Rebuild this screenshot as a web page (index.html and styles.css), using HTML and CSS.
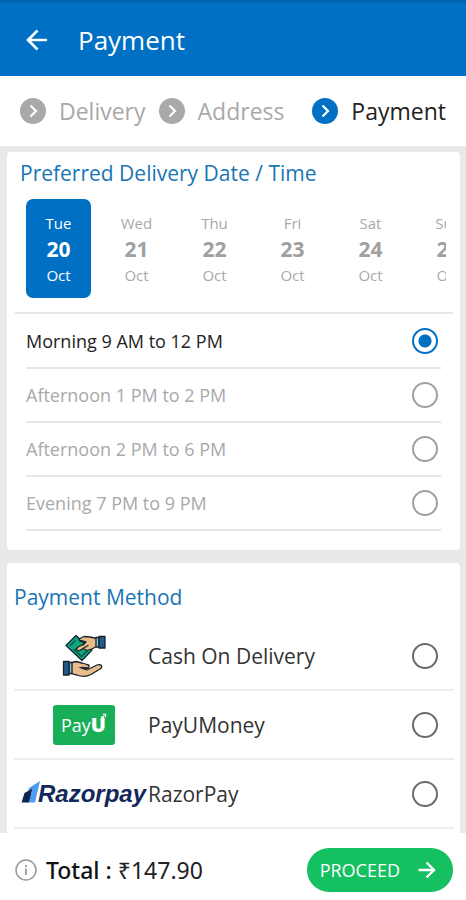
FILE: index.html
```
<!DOCTYPE html>
<html lang="en">
<head>
<meta charset="utf-8">
<meta name="viewport" content="width=device-width, initial-scale=1">
<title>Payment</title>
<link rel="stylesheet" href="styles.css">
</head>
<body>
<header class="topbar">
  <button class="back" type="button" aria-label="Back">
    <svg width="24" height="24" viewBox="0 0 24 24" fill="none" stroke="currentColor" stroke-width="2.600"><path d="M23 12H4.500M13.500 2.500L4 12L13.500 21.500"/></svg>
  </button>
  <h1>Payment</h1>
</header>
<nav class="steps" aria-label="Checkout steps">
  <a class="step" href="#delivery"><svg width="26" height="26" viewBox="0 0 26 26"><circle cx="13" cy="13" r="13" fill="currentColor"/><path d="M10.500 7.500L16 13L10.500 18.500" fill="none" stroke="#fff" stroke-width="2.200"/></svg><span>Delivery</span></a>
  <a class="step" href="#address"><svg width="26" height="26" viewBox="0 0 26 26"><circle cx="13" cy="13" r="13" fill="currentColor"/><path d="M10.500 7.500L16 13L10.500 18.500" fill="none" stroke="#fff" stroke-width="2.200"/></svg><span>Address</span></a>
  <a class="step current" href="#payment" aria-current="step"><svg width="26" height="26" viewBox="0 0 26 26"><circle cx="13" cy="13" r="13" fill="currentColor"/><path d="M10.500 7.500L16 13L10.500 18.500" fill="none" stroke="#fff" stroke-width="2.200"/></svg><span>Payment</span></a>
</nav>
<main class="content">
  <section class="card schedule">
    <h2>Preferred Delivery Date / Time</h2>
    <div class="dates">
      <button type="button" class="date selected"><span>Tue</span><b>20</b><span>Oct</span></button>
      <button type="button" class="date"><span>Wed</span><b>21</b><span>Oct</span></button>
      <button type="button" class="date"><span>Thu</span><b>22</b><span>Oct</span></button>
      <button type="button" class="date"><span>Fri</span><b>23</b><span>Oct</span></button>
      <button type="button" class="date"><span>Sat</span><b>24</b><span>Oct</span></button>
      <button type="button" class="date"><span>Sun</span><b>25</b><span>Oct</span></button>
    </div>
    <div class="slots">
      <label class="slot"><span>Morning 9 AM to 12 PM</span><input type="radio" name="slot" checked></label>
      <label class="slot"><span>Afternoon 1 PM to 2 PM</span><input type="radio" name="slot"></label>
      <label class="slot"><span>Afternoon 2 PM to 6 PM</span><input type="radio" name="slot"></label>
      <label class="slot"><span>Evening 7 PM to 9 PM</span><input type="radio" name="slot"></label>
    </div>
  </section>
  <section class="card methods">
    <h2>Payment Method</h2>
    <label class="method">
      <span class="logo">
        <svg width="44" height="44" viewBox="0 0 44 44" stroke="#17232b" stroke-width="1.300" stroke-linejoin="round" stroke-linecap="round" aria-hidden="true">
          <path d="M4 11.500L14 1.500L30 16L20 26.500Z" fill="#12a680"/>
          <path d="M8.500 11.500L13 7M12 15.500L19.500 22.500L25 17" fill="none" stroke="#07564a" stroke-width="1.500"/>
          <path d="M17 5L22 2.500L28 3L35 4.500V12L31 14.500L25 16.500L21 14.500L17 17L14 15.500L16 13L21 10.500L23 8L18 7Z" fill="#e9bd8b"/>
          <path d="M18 6.500L24 8L21 11M21 14.500L26 11.500" fill="none"/>
          <path d="M34 3.500H37V13H34Z" fill="#8cc5e3"/>
          <path d="M37 2.500H43V14H37Z" fill="#225b8b"/>
          <path d="M8 29L14 27.500L20 29L25 30.500C28 31 28 33.500 25 34L20 33.500L27 35L35 31C40 29.500 41 33 38 35L29 40.500C25 42.500 19 42.500 15 41L8 39Z" fill="#e9bd8b"/>
          <path d="M18 33.500L25 36" fill="none"/>
          <path d="M7 28.500H10V39.500H7Z" fill="#8cc5e3"/>
          <path d="M1.500 27.500H7V41H1.500Z" fill="#225b8b"/>
        </svg>
      </span>
      <span class="name">Cash On Delivery</span><input type="radio" name="method">
    </label>
    <label class="method">
      <span class="logo">
        <svg width="62" height="40" viewBox="0 0 62 40" aria-hidden="true">
          <rect width="62" height="40" rx="3" fill="#19ae58"/>
          <text class="payu" x="8" y="27">Pay<tspan class="payu-u">U</tspan></text>
          <path d="M48 12H50.500V15M50 9.500H52.500V12" fill="none" stroke="#fff" stroke-width="1.300"/>
        </svg>
      </span>
      <span class="name">PayUMoney</span><input type="radio" name="method">
    </label>
    <label class="method">
      <span class="logo">
        <svg width="126" height="30" viewBox="0 0 126 30" aria-hidden="true">
          <path d="M8 9L19 2L14 23.500H8L11.500 10L7 12Z" fill="#4a9df0"/>
          <path d="M3.500 14L11.500 9.500L8 23.500H0.500Z" fill="#0b2752"/>
          <text class="razor" x="17" y="23">Razorpay</text>
        </svg>
      </span>
      <span class="name">RazorPay</span><input type="radio" name="method">
    </label>
  </section>
</main>
<footer class="bottom">
  <svg width="22" height="22" viewBox="0 0 22 22" fill="none" stroke="#999" stroke-width="1.500" aria-hidden="true"><circle cx="11" cy="11" r="10"/><path d="M11 9.500V16M11 6V8" stroke-width="1.800"/></svg>
  <p class="total"><strong>Total :</strong> ₹147.90</p>
  <button class="proceed" type="button"><span>PROCEED</span><svg width="18" height="18" viewBox="0 0 18 18" fill="none" stroke="currentColor" stroke-width="2.400"><path d="M0.500 9H16M8.500 1.500L16 9L8.500 16.500"/></svg></button>
</footer>
</body>
</html>
```

FILE: styles.css
```
* { box-sizing: border-box; }
body {
  margin: 0;
  height: 100vh;
  display: flex;
  flex-direction: column;
  background: #fff;
  color: #222;
  font-family: "Open Sans", "Noto Sans", sans-serif;
}
h1, h2, p { margin: 0; font-weight: 400; }
button { font: inherit; border: 0; padding: 0; background: none; color: inherit; cursor: pointer; }

.topbar {
  flex: none;
  display: flex;
  align-items: center;
  gap: 30px;
  height: 76px;
  padding: 4px 24px 0;
  background: linear-gradient(#005da8, #0070c5 4px);
  color: #fff;
}
.back { display: flex; }
.topbar h1 { font-size: 26px; line-height: 34px; }

.steps {
  flex: none;
  display: flex;
  align-items: center;
  gap: 13px;
  height: 70px;
  padding: 0 20px;
}
.step {
  display: flex;
  align-items: center;
  gap: 13px;
  color: #a9a9a9;
  font-size: 23px;
  line-height: 32px;
  text-decoration: none;
}
.step.current { color: #0070c5; margin-left: auto; }
.step.current span { color: #222; }

.content {
  flex: 1;
  min-height: 0;
  overflow: hidden;
  display: flex;
  flex-direction: column;
  gap: 13px;
  padding: 6px 6px 0 7px;
  background: #e9e9ec;
}
.card { flex: none; background: #fff; border-radius: 4px; }
.card h2 { color: #1a75b5; font-size: 21px; line-height: 28px; }

.schedule { padding: 7px 7px 19px 8px; }
.schedule h2 { padding-left: 5px; }
.dates {
  display: flex;
  gap: 13px;
  overflow: hidden;
  margin: 12px 7px 14px 11px;
}
.date {
  flex: none;
  width: 65px;
  height: 99px;
  border-radius: 7px;
  display: flex;
  flex-direction: column;
  align-items: center;
  justify-content: center;
  color: #a9a9a9;
  font-size: 15px;
  line-height: 26px;
}
.date b { font-size: 21px; color: #a0a0a0; }
.date.selected, .date.selected b { color: #fff; }
.date.selected { background: #0070c5; }

.slots { border-top: 2px solid #e6e6e6; padding: 1px 12px 0 11px; }
.slot {
  display: flex;
  align-items: center;
  justify-content: space-between;
  height: 54px;
  padding-right: 3px;
  border-bottom: 2px solid #e6e6e6;
  color: #a9a9a9;
  font-size: 18px;
  line-height: 26px;
}
.slot:has(:checked) { color: #222; }

input[type="radio"] {
  appearance: none;
  flex: none;
  margin: 0;
  width: 26px;
  height: 26px;
  border: 2px solid #6b6b6b;
  border-radius: 50%;
}
.slot input[type="radio"] { border-color: #a0a0a0; }
.slot input[type="radio"]:checked {
  border-color: #0070c5;
  background: radial-gradient(circle, #0070c5 6px, transparent 7px);
}

.methods { padding: 20px 6px 20px 7px; }
.methods h2 { margin-bottom: 11px; }
.method {
  display: flex;
  align-items: center;
  height: 69px;
  padding-right: 16px;
  border-bottom: 2px solid #eee;
}
.logo { flex: none; display: flex; justify-content: center; width: 134px; padding-left: 6px; }
.name { flex: 1; font-size: 21px; line-height: 28px; color: #333; }
.payu { font: 400 18px "Open Sans", sans-serif; fill: #fff; }
.payu-u { font-size: 20px; font-weight: 800; }
.razor { font: italic 700 24px "Liberation Sans", sans-serif; fill: #12275a; }

.bottom {
  flex: none;
  display: flex;
  align-items: center;
  gap: 9px;
  height: 67px;
  padding: 7px 13px 0 15px;
}
.total { flex: 1; font-family: "Noto Sans", sans-serif; font-size: 23px; line-height: 32px; }
.total strong { font-weight: 500; color: #111; }
.proceed {
  display: flex;
  align-items: center;
  justify-content: space-between;
  gap: 18px;
  height: 44px;
  padding: 0 17px 0 13px;
  border-radius: 22px;
  background: #15c060;
  color: #fff;
  font-size: 18px;
  line-height: 26px;
}
```
